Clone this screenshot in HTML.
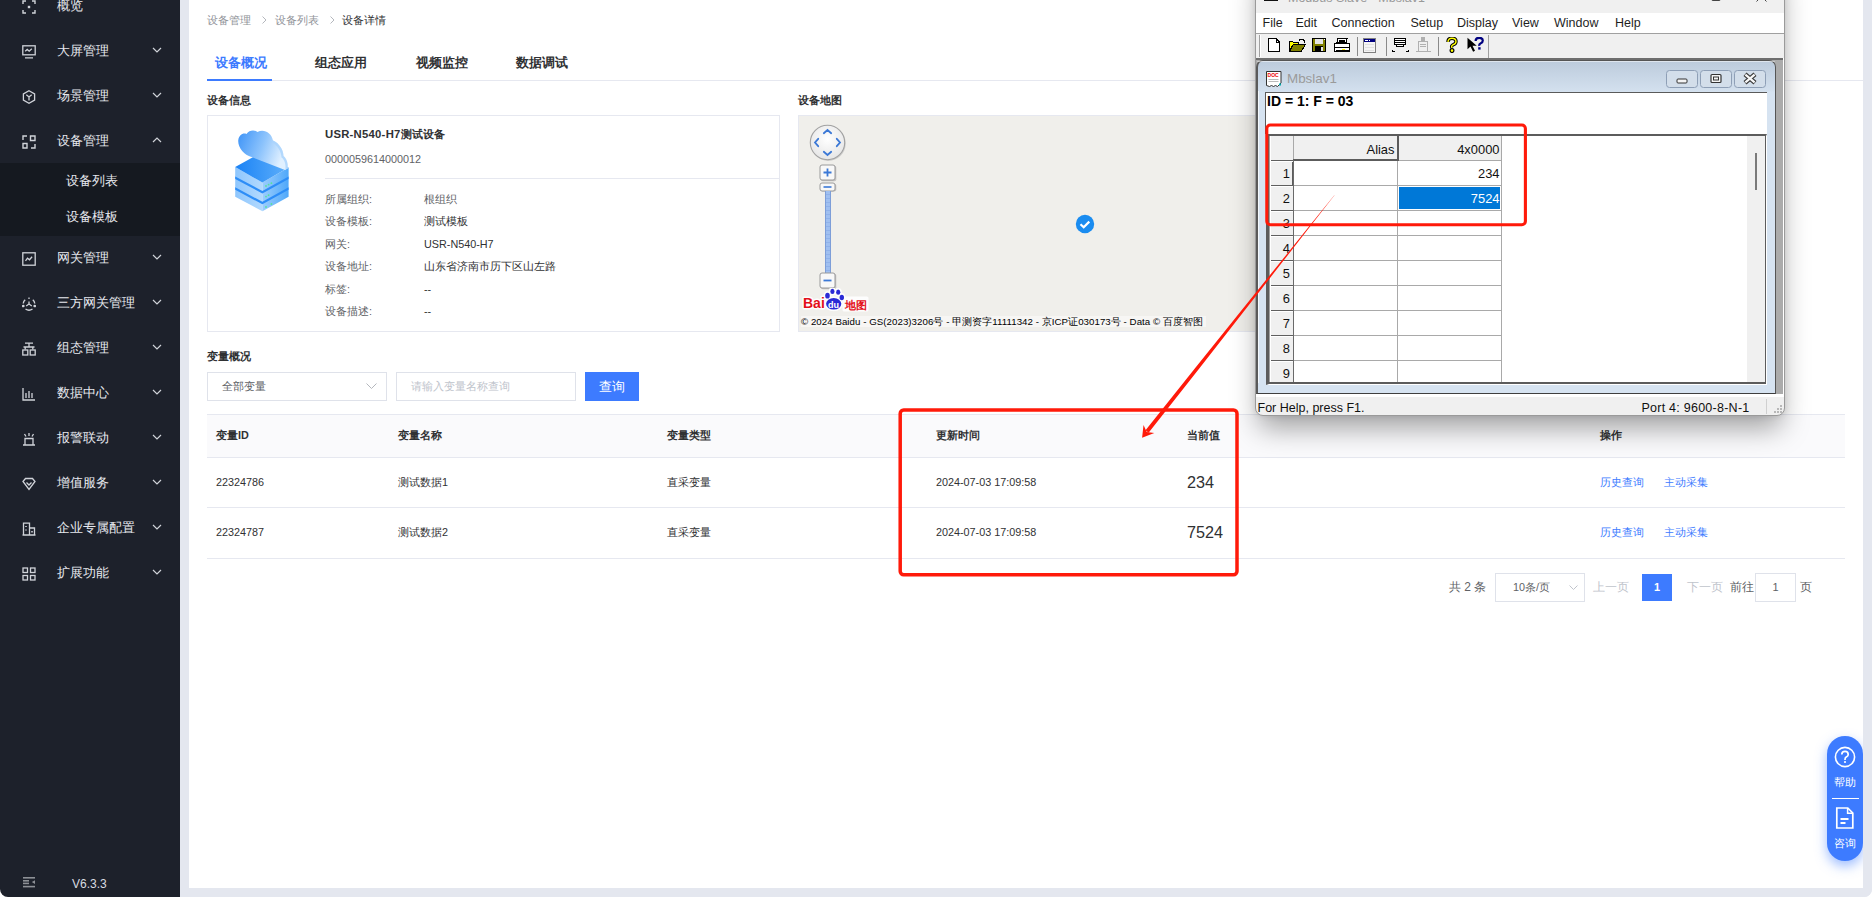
<!DOCTYPE html>
<html><head><meta charset="utf-8">
<style>
*{margin:0;padding:0;box-sizing:border-box}
html,body{width:1872px;height:897px;overflow:hidden;background:#fff}
body{font-family:"Liberation Sans",sans-serif;position:relative;color:#303133}
.a{position:absolute;white-space:nowrap}
/* sidebar */
#sb{position:absolute;left:0;top:0;width:180px;height:897px;background:#1d212b;border-bottom-left-radius:8px}
.mi{position:absolute;left:0;width:180px;height:45px;color:#e6e8ee;font-size:13px}
.mi .t{position:absolute;left:57px;top:0;line-height:45px}
.mi .ic{position:absolute;left:22px;top:17px;width:14px;height:14px}
.mi .ch{position:absolute;left:152px;top:19px;width:10px;height:6px}
#sub{position:absolute;left:0;top:163px;width:180px;height:73px;background:#151920}
.si{position:absolute;left:66px;color:#e6e8ee;font-size:13px;line-height:36px}
#gut{position:absolute;left:180px;top:0;width:9px;height:897px;background:#e4e7ef}
#gutr{position:absolute;left:1863px;top:0;width:9px;height:897px;background:#e4e7ef;border-bottom-right-radius:8px}
#gutb{position:absolute;left:180px;top:888px;width:1692px;height:9px;background:#e4e7ef;border-bottom-right-radius:8px}

.c12{font-size:10.8px}
#bc{position:absolute;left:207px;top:12px;font-size:10.8px;color:#909399;line-height:16px}
#bc span{position:absolute;white-space:nowrap}
.tab{position:absolute;top:54px;font-size:12.6px;font-weight:bold;color:#303133;line-height:18px;white-space:nowrap}
.sec{position:absolute;font-size:10.8px;font-weight:bold;color:#303133;line-height:14px;white-space:nowrap}
.lb{position:absolute;left:325px;font-size:10.8px;color:#606266;line-height:14px;white-space:nowrap}
.vl{position:absolute;left:424px;font-size:10.8px;color:#303133;line-height:14px;white-space:nowrap}
.th{position:absolute;top:428px;font-size:10.8px;font-weight:bold;color:#303133;line-height:14px;white-space:nowrap}
.td{position:absolute;font-size:10.8px;color:#303133;line-height:14px;white-space:nowrap}
.lk{position:absolute;font-size:10.8px;color:#3d7bff;line-height:14px;white-space:nowrap}
.hl{position:absolute;left:207px;width:1638px;height:1px;background:#e6e8f0}

#mb{position:absolute;left:1255px;top:-40px;width:530px;height:456px;background:#f0f0f0;border:1px solid #9a9a9a;border-radius:8px;box-shadow:0 16px 28px -4px rgba(0,0,0,0.36),0 0 6px rgba(0,0,0,0.10);overflow:hidden;font-family:"Liberation Sans",sans-serif}
#mb .m{position:absolute;top:0;font-size:12.4px;color:#1a1a1a;line-height:19px;white-space:nowrap}
.seg{position:absolute;font-size:12.9px;color:#111;white-space:nowrap;line-height:14px}
.gl{position:absolute;background:#a9a9a9}
</style></head><body>
<div id="sb">
  <div class="mi" style="top:-17px"><svg class="ic" viewBox="0 0 14 14" fill="none" stroke="#d0d3d9" stroke-width="1.4"><path d="M1 4V1h3M10 1h3v3M13 10v3h-3M4 13H1v-3"/><rect x="5.8" y="5.8" width="2.4" height="2.4" fill="#d0d3d9" stroke="none"/></svg><span class="t">概览</span></div>
  <div class="mi" style="top:28px"><svg class="ic" viewBox="0 0 14 14" fill="none" stroke="#d0d3d9" stroke-width="1.3"><rect x="0.8" y="0.8" width="12.4" height="9"/><path d="M3 12.8h8M3.2 6.2l2-1.8 2 1.8 2.6-2.4"/></svg><span class="t">大屏管理</span><svg class="ch" viewBox="0 0 10 6" fill="none" stroke="#d0d3d9" stroke-width="1.2"><path d="M1 1l4 4 4-4"/></svg></div>
  <div class="mi" style="top:73px"><svg class="ic" viewBox="0 0 14 14" fill="none" stroke="#d0d3d9" stroke-width="1.3"><path d="M7 0.8l5.6 3.2v6L7 13.2 1.4 10V4z"/><path d="M4.3 4.8L7 7l2.7-2.2M7 7v3.6"/></svg><span class="t">场景管理</span><svg class="ch" viewBox="0 0 10 6" fill="none" stroke="#d0d3d9" stroke-width="1.2"><path d="M1 1l4 4 4-4"/></svg></div>
  <div class="mi" style="top:118px"><svg class="ic" viewBox="0 0 14 14" fill="none" stroke="#d0d3d9" stroke-width="1.4"><path d="M1 5V1h4M1 8.5h4v4.5H1zM8.5 1h4.5v4.5H8.5zM13 9v4H9"/></svg><span class="t">设备管理</span><svg class="ch" viewBox="0 0 10 6" fill="none" stroke="#d0d3d9" stroke-width="1.2"><path d="M1 5l4-4 4 4"/></svg></div>
  <div class="mi" style="top:235px"><svg class="ic" viewBox="0 0 14 14" fill="none" stroke="#d0d3d9" stroke-width="1.3"><rect x="0.8" y="0.8" width="12.4" height="12.4"/><path d="M3.5 8.8l2-2.6 2 1.6 2.6-3"/></svg><span class="t">网关管理</span><svg class="ch" viewBox="0 0 10 6" fill="none" stroke="#d0d3d9" stroke-width="1.2"><path d="M1 1l4 4 4-4"/></svg></div>
  <div class="mi" style="top:280px"><svg class="ic" viewBox="0 0 14 14" fill="none" stroke="#d0d3d9" stroke-width="1.3"><path d="M7 0.5v1.5M7 4.5v2.5L4.2 9M7 7l2.8 2M3.2 2.8A6 6 0 0 0 1.2 6.5M10.8 2.8A6 6 0 0 1 12.8 6.5M3.5 12a6 6 0 0 0 7 0"/><circle cx="1.3" cy="9" r="0.7" fill="#d0d3d9"/><circle cx="12.7" cy="9" r="0.7" fill="#d0d3d9"/></svg><span class="t">三方网关管理</span><svg class="ch" viewBox="0 0 10 6" fill="none" stroke="#d0d3d9" stroke-width="1.2"><path d="M1 1l4 4 4-4"/></svg></div>
  <div class="mi" style="top:325px"><svg class="ic" viewBox="0 0 14 14" fill="none" stroke="#d0d3d9" stroke-width="1.3"><path d="M3 1.2h8M7 1.2v3.8M1.5 5h11M3.2 5v2.5M10.8 5v2.5"/><rect x="0.8" y="8" width="5" height="5"/><rect x="8.2" y="8" width="5" height="5"/></svg><span class="t">组态管理</span><svg class="ch" viewBox="0 0 10 6" fill="none" stroke="#d0d3d9" stroke-width="1.2"><path d="M1 1l4 4 4-4"/></svg></div>
  <div class="mi" style="top:370px"><svg class="ic" viewBox="0 0 14 14" fill="none" stroke="#d0d3d9" stroke-width="1.3"><path d="M1 1v12h12M4 6v5M7 4v7M10 6v5"/></svg><span class="t">数据中心</span><svg class="ch" viewBox="0 0 10 6" fill="none" stroke="#d0d3d9" stroke-width="1.2"><path d="M1 1l4 4 4-4"/></svg></div>
  <div class="mi" style="top:415px"><svg class="ic" viewBox="0 0 14 14" fill="none" stroke="#d0d3d9" stroke-width="1.3"><path d="M1 13h12M3 13V6.5h8V13M7 1v3M2.5 2l1.5 2.5M11.5 2l-1.5 2.5"/></svg><span class="t">报警联动</span><svg class="ch" viewBox="0 0 10 6" fill="none" stroke="#d0d3d9" stroke-width="1.2"><path d="M1 1l4 4 4-4"/></svg></div>
  <div class="mi" style="top:460px"><svg class="ic" viewBox="0 0 14 14" fill="none" stroke="#d0d3d9" stroke-width="1.3"><path d="M1 4.5L3.5 1.5h7L13 4.5 7 12.5z"/><path d="M4.5 5.5L7 8l2.5-2.5"/></svg><span class="t">增值服务</span><svg class="ch" viewBox="0 0 10 6" fill="none" stroke="#d0d3d9" stroke-width="1.2"><path d="M1 1l4 4 4-4"/></svg></div>
  <div class="mi" style="top:505px"><svg class="ic" viewBox="0 0 14 14" fill="none" stroke="#d0d3d9" stroke-width="1.3"><path d="M0.5 13h13M1.5 13V1.2h6V13M7.5 6h5V13"/><path d="M4 4v1M4 7.5v1M10 9v1.5" stroke-width="1.6"/></svg><span class="t">企业专属配置</span><svg class="ch" viewBox="0 0 10 6" fill="none" stroke="#d0d3d9" stroke-width="1.2"><path d="M1 1l4 4 4-4"/></svg></div>
  <div class="mi" style="top:550px"><svg class="ic" viewBox="0 0 14 14" fill="none" stroke="#d0d3d9" stroke-width="1.3"><rect x="1" y="1" width="4.5" height="4.5"/><rect x="8.5" y="1" width="4.5" height="4.5"/><rect x="1" y="8.5" width="4.5" height="4.5"/><rect x="8.5" y="8.5" width="4.5" height="4.5"/></svg><span class="t">扩展功能</span><svg class="ch" viewBox="0 0 10 6" fill="none" stroke="#d0d3d9" stroke-width="1.2"><path d="M1 1l4 4 4-4"/></svg></div>
  <svg class="a" style="left:23px;top:877px" width="13" height="11" viewBox="0 0 13 11" fill="#8d9096"><rect x="0" y="0" width="12" height="1.6"/><rect x="0" y="3" width="6" height="1.6"/><rect x="0" y="5.6" width="6" height="1.6"/><rect x="0" y="8.8" width="12" height="1.6"/><path d="M12 3.2v3.8L8.8 5.1z"/></svg>
  <div class="a" style="left:72px;top:877px;font-size:12px;color:#d9dbe0;line-height:14px">V6.3.3</div>
  <div id="sub"><div class="si" style="top:0">设备列表</div><div class="si" style="top:36px">设备模板</div></div>
</div>

<!-- breadcrumb -->
<div id="bc"><span style="left:0">设备管理</span><svg class="a" style="left:55px;top:4px" width="5" height="8" viewBox="0 0 5 8" fill="none" stroke="#b4b7bd" stroke-width="1"><path d="M0.5 0.5L4 4 0.5 7.5"/></svg><span style="left:68px">设备列表</span><svg class="a" style="left:123px;top:4px" width="5" height="8" viewBox="0 0 5 8" fill="none" stroke="#b4b7bd" stroke-width="1"><path d="M0.5 0.5L4 4 0.5 7.5"/></svg><span style="left:135px;color:#303133">设备详情</span></div>
<!-- tabs -->
<div class="tab" style="left:215px;color:#3d7bff">设备概况</div>
<div class="tab" style="left:315px">组态应用</div>
<div class="tab" style="left:416px">视频监控</div>
<div class="tab" style="left:516px">数据调试</div>
<div class="a" style="left:207px;top:80px;width:1656px;height:1px;background:#e6e8f0"></div>
<div class="a" style="left:207px;top:79px;width:65px;height:2px;background:#3d7bff"></div>
<!-- device info -->
<div class="sec" style="left:207px;top:93px">设备信息</div>
<div class="a" style="left:207px;top:115px;width:573px;height:217px;border:1px solid #e6e8f0"></div>
<svg class="a" style="left:228px;top:125px" width="70" height="92" viewBox="0 0 70 92">
<defs>
<linearGradient id="cl" x1="0" y1="0" x2="1" y2="0.3"><stop offset="0" stop-color="#3d93f7"/><stop offset="0.55" stop-color="#8cc3fc"/><stop offset="1" stop-color="#e0f0ff"/></linearGradient>
<linearGradient id="lf" x1="0" y1="0" x2="1" y2="0"><stop offset="0" stop-color="#8ec6fd"/><stop offset="1" stop-color="#b2d9fe"/></linearGradient>
<linearGradient id="rf" x1="0" y1="0" x2="1" y2="0"><stop offset="0" stop-color="#9bcdfd"/><stop offset="1" stop-color="#4fa8fa"/></linearGradient>
<linearGradient id="tp" x1="0" y1="0" x2="1" y2="0"><stop offset="0" stop-color="#1a82f5"/><stop offset="1" stop-color="#5fb0fb"/></linearGradient>
</defs>
<path d="M7.2 42.1 L34.4 57.5 L34.4 86.2 L7.2 71.8z" fill="url(#lf)"/>
<path d="M34.4 57.5 L60.6 42.6 L60.6 71.8 L34.4 86.2z" fill="url(#rf)"/>
<path d="M7.2 51.5 L34.4 66 L60.6 51.5 L60.6 54 L34.4 68.5 L7.2 54z" fill="#2d8df7"/>
<path d="M7.2 62.3 L34.4 76.8 L60.6 62.3 L60.6 64.8 L34.4 79.3 L7.2 64.8z" fill="#2d8df7"/>
<path d="M7.2 42.1 L34 27 L60.6 42.6 L34.4 57.5z" fill="url(#tp)"/>
<path d="M23.5 32 C16 30 9.5 22 10.3 15 C11 10 15 7.5 18.5 9 C21 5 26.5 4.5 29.5 7 C36 3.5 43.5 8 45 15.5 C51.5 18.5 55.5 25 55.5 31 C58.5 33.5 60.5 38.5 59.5 43.5 L57 45 Z" fill="url(#cl)"/>
<path d="M45 15.5 C51.5 18.5 55.5 25 55.5 31 C58.5 33.5 60.5 38.5 59.5 43.5 L57.5 44.5 C58 39 56.5 34.5 53.5 32.5 C53 26 49.5 20 43.5 17z" fill="#a9d3fd" opacity="0.8"/>
<g fill="#55e39c"><circle cx="38" cy="61" r="0.9"/><circle cx="40.6" cy="59.6" r="0.9"/><circle cx="43.4" cy="58.2" r="0.9"/><circle cx="38" cy="71.6" r="0.9"/><circle cx="40.6" cy="70.2" r="0.9"/><circle cx="38" cy="82" r="0.9"/><circle cx="43.4" cy="79" r="0.9"/></g>
</svg>

<div class="sec" style="left:325px;top:127px;font-size:11.3px;letter-spacing:0.25px">USR-N540-H7测试设备</div>
<div class="td" style="left:325px;top:152px;color:#606266">0000059614000012</div>
<div class="a" style="left:325px;top:178px;width:454px;height:1px;background:#e6e8f0"></div>
<div class="lb" style="top:192px">所属组织:</div><div class="vl" style="top:192px;color:#606266">根组织</div>
<div class="lb" style="top:214px">设备模板:</div><div class="vl" style="top:214px">测试模板</div>
<div class="lb" style="top:237px">网关:</div><div class="vl" style="top:237px">USR-N540-H7</div>
<div class="lb" style="top:259px">设备地址:</div><div class="vl" style="top:259px">山东省济南市历下区山左路</div>
<div class="lb" style="top:282px">标签:</div><div class="vl" style="top:282px">--</div>
<div class="lb" style="top:304px">设备描述:</div><div class="vl" style="top:304px">--</div>
<!-- map -->
<div class="sec" style="left:798px;top:93px">设备地图</div>
<div class="a" id="map" style="left:798px;top:115px;width:573px;height:217px;background:#f0efeb;border:1px solid #e6e8f0"></div>

<div class="a" style="left:798px;top:115px;width:573px;height:217px;overflow:hidden">
 <svg class="a" style="left:11px;top:9px" width="38" height="38" viewBox="0 0 38 38"><defs><radialGradient id="ng" cx="50%" cy="40%" r="60%"><stop offset="0" stop-color="#ffffff"/><stop offset="1" stop-color="#e6e6e6"/></radialGradient></defs><circle cx="19.3" cy="19.5" r="17.4" fill="#b5b5b5" opacity="0.6"/><circle cx="18.5" cy="18.5" r="17.2" fill="url(#ng)" stroke="#a2a2a2" stroke-width="1.1"/><g fill="none" stroke="#3b78d6" stroke-width="1.8" stroke-linecap="round"><path d="M14.8 9.2l3.7-3.2 3.7 3.2M14.8 27.8l3.7 3.2 3.7-3.2M9.2 14.8l-3.2 3.7 3.2 3.7M27.8 14.8l3.2 3.7-3.2 3.7"/></g></svg>
 <svg class="a" style="left:21px;top:49px" width="18" height="18" viewBox="0 0 18 18"><rect x="1.8" y="1.8" width="15.5" height="15.5" rx="2" fill="#b0b0b0" opacity="0.7"/><rect x="1" y="1" width="15" height="15" rx="2" fill="#f8f8f8" stroke="#9a9a9a"/><path d="M8.5 4.5v8M4.5 8.5h8" stroke="#3b78d6" stroke-width="1.8"/></svg>
 <svg class="a" style="left:21px;top:67px" width="18" height="10" viewBox="0 0 18 10"><rect x="1.8" y="1.8" width="15.5" height="7.8" rx="2" fill="#b0b0b0" opacity="0.7"/><rect x="1" y="1" width="15" height="8" rx="2" fill="#f8f8f8" stroke="#9a9a9a"/><path d="M4.5 5h8" stroke="#3b78d6" stroke-width="1.6"/></svg>
 <div class="a" style="left:27px;top:76px;width:6px;height:83px;background:repeating-linear-gradient(#9fbff0 0,#9fbff0 3px,#8fb1ea 3px,#8fb1ea 4px);border-left:1px solid #7d9ed8;border-right:1px solid #7d9ed8"></div>
 <svg class="a" style="left:21px;top:157px" width="18" height="18" viewBox="0 0 18 18"><rect x="1.8" y="1.8" width="15.5" height="15.5" rx="2" fill="#b0b0b0" opacity="0.7"/><rect x="1" y="1" width="15" height="15" rx="2" fill="#f8f8f8" stroke="#9a9a9a"/><path d="M4.5 8.5h8" stroke="#3b78d6" stroke-width="1.8"/></svg>
 <svg class="a" style="left:3px;top:173px" width="70" height="26" viewBox="0 0 70 26">
<g stroke="#fff" stroke-width="3" stroke-linejoin="round" opacity="0.9"><text x="2" y="20.3" font-family="Liberation Sans" font-weight="bold" font-size="14" fill="#fff">Bai</text><ellipse cx="32.7" cy="15.8" rx="7.8" ry="6" fill="#fff"/><rect x="43" y="10" width="23" height="12" fill="#fff"/><ellipse cx="26.5" cy="7.7" rx="2.4" ry="3" fill="#fff"/><ellipse cx="31.4" cy="3.4" rx="2.2" ry="2.7" fill="#fff"/><ellipse cx="37.2" cy="4.2" rx="2.2" ry="2.7" fill="#fff"/><ellipse cx="40.8" cy="9.5" rx="2.3" ry="2.9" fill="#fff"/></g>
<text x="2" y="20.3" font-family="Liberation Sans" font-weight="bold" font-size="14" fill="#e3101a">Bai</text>
<g fill="#2a2ad6"><ellipse cx="32.7" cy="15.8" rx="7.6" ry="5.8"/><ellipse cx="26.5" cy="7.7" rx="2.3" ry="2.9"/><ellipse cx="31.4" cy="3.4" rx="2.1" ry="2.6"/><ellipse cx="37.2" cy="4.2" rx="2.1" ry="2.6"/><ellipse cx="40.8" cy="9.5" rx="2.2" ry="2.8"/></g>
<text x="27" y="20" font-family="Liberation Sans" font-weight="bold" font-size="9" fill="#fff">du</text>
<text x="43.5" y="20.8" font-size="10.5" font-weight="bold" fill="#e3101a" font-family="Liberation Sans">地图</text>
</svg>
 <div class="a" style="left:3px;top:201px;height:11px;background:rgba(255,255,255,0.45);font-size:9.7px;color:#000;line-height:11px;padding-right:3px;letter-spacing:0.05px">&#169; 2024 Baidu - GS(2023)3206号 - 甲测资字11111342 - 京ICP证030173号 - Data &#169; 百度智图</div>
 <svg class="a" style="left:277px;top:99px" width="20" height="20" viewBox="0 0 20 20"><circle cx="10" cy="10" r="9.2" fill="#1a8cf0"/><path d="M5.5 10.2l3.2 3 5.6-5.6" fill="none" stroke="#fff" stroke-width="2.2"/></svg>
</div>
<!-- variables -->
<div class="sec" style="left:207px;top:349px">变量概况</div>
<div class="a" style="left:207px;top:372px;width:180px;height:29px;border:1px solid #dfe2ea"></div>
<div class="td" style="left:222px;top:379px;color:#606266">全部变量</div>
<svg class="a" style="left:366px;top:383px" width="11" height="6" viewBox="0 0 11 6" fill="none" stroke="#b4b7bd" stroke-width="1"><path d="M0.5 0.5l5 5 5-5"/></svg>
<div class="a" style="left:396px;top:372px;width:180px;height:29px;border:1px solid #dfe2ea"></div>
<div class="td" style="left:411px;top:379px;color:#c0c4cc">请输入变量名称查询</div>
<div class="a" style="left:585px;top:372px;width:54px;height:29px;background:#3d7bff;color:#fff;font-size:12.6px;line-height:30px;text-align:center">查询</div>
<!-- table -->
<div class="a" style="left:207px;top:414px;width:1638px;height:44px;background:#fafafc"></div>
<div class="hl" style="top:414px"></div>
<div class="hl" style="top:457px"></div>
<div class="hl" style="top:507px"></div>
<div class="hl" style="top:558px"></div>
<div class="th" style="left:216px">变量ID</div>
<div class="th" style="left:398px">变量名称</div>
<div class="th" style="left:667px">变量类型</div>
<div class="th" style="left:936px">更新时间</div>
<div class="th" style="left:1187px">当前值</div>
<div class="th" style="left:1600px">操作</div>
<div class="td" style="left:216px;top:475px">22324786</div>
<div class="td" style="left:398px;top:475px">测试数据1</div>
<div class="td" style="left:667px;top:475px">直采变量</div>
<div class="td" style="left:936px;top:475px">2024-07-03 17:09:58</div>
<div class="td" style="left:1187px;top:472px;font-size:16.2px;line-height:20px">234</div>
<div class="lk" style="left:1600px;top:475px">历史查询</div>
<div class="lk" style="left:1664px;top:475px">主动采集</div>
<div class="td" style="left:216px;top:525px">22324787</div>
<div class="td" style="left:398px;top:525px">测试数据2</div>
<div class="td" style="left:667px;top:525px">直采变量</div>
<div class="td" style="left:936px;top:525px">2024-07-03 17:09:58</div>
<div class="td" style="left:1187px;top:522px;font-size:16.2px;line-height:20px">7524</div>
<div class="lk" style="left:1600px;top:525px">历史查询</div>
<div class="lk" style="left:1664px;top:525px">主动采集</div>
<!-- pagination -->
<div class="td" style="left:1449px;top:580px;color:#606266;font-size:12px">共 2 条</div>
<div class="a" style="left:1495px;top:573px;width:90px;height:29px;border:1px solid #dfe2ea"></div>
<div class="td" style="left:1513px;top:580px;color:#606266">10条/页</div>
<svg class="a" style="left:1569px;top:585px" width="9" height="5" viewBox="0 0 9 5" fill="none" stroke="#c0c4cc" stroke-width="1"><path d="M0.5 0.5l4 4 4-4"/></svg>
<div class="td" style="left:1593px;top:580px;color:#c0c4cc;font-size:12px">上一页</div>
<div class="a" style="left:1642px;top:574px;width:30px;height:27px;background:#3d7bff;color:#fff;font-size:11px;font-weight:bold;line-height:27px;text-align:center">1</div>
<div class="td" style="left:1687px;top:580px;color:#c0c4cc;font-size:12px">下一页</div>
<div class="td" style="left:1730px;top:580px;color:#606266;font-size:12px">前往</div>
<div class="a" style="left:1755px;top:573px;width:41px;height:29px;border:1px solid #dfe2ea;font-size:11px;line-height:27px;text-align:center;color:#606266">1</div>
<div class="td" style="left:1800px;top:580px;color:#606266;font-size:12px">页</div>
<!-- float help -->
<div id="mb">
<div class="a" style="left:0;top:51.5px;width:530px;height:20px;background:#fff"></div>
<div class="a" style="left:0;top:71.5px;width:530px;height:1px;background:#a0a0a0"></div>
<div class="a" style="left:6.5px;top:52.5px;font-size:12.5px;color:#1f1f1f;line-height:18px">File</div>
<div class="a" style="left:39.5px;top:52.5px;font-size:12.5px;color:#1f1f1f;line-height:18px">Edit</div>
<div class="a" style="left:75.5px;top:52.5px;font-size:12.5px;color:#1f1f1f;line-height:18px">Connection</div>
<div class="a" style="left:154.5px;top:52.5px;font-size:12.5px;color:#1f1f1f;line-height:18px">Setup</div>
<div class="a" style="left:201px;top:52.5px;font-size:12.5px;color:#1f1f1f;line-height:18px">Display</div>
<div class="a" style="left:256px;top:52.5px;font-size:12.5px;color:#1f1f1f;line-height:18px">View</div>
<div class="a" style="left:298px;top:52.5px;font-size:12.5px;color:#1f1f1f;line-height:18px">Window</div>
<div class="a" style="left:359px;top:52.5px;font-size:12.5px;color:#1f1f1f;line-height:18px">Help</div>
<div class="a" style="left:32px;top:30px;font-size:12.5px;color:#999;line-height:14px">Modbus Slave - Mbslav1</div>
<div class="a" style="left:8px;top:33px;width:14px;height:7px;background:#111"></div>
<div class="a" style="left:455px;top:30px;width:10px;height:10px;border:1px solid #444;border-radius:2px"></div>
<svg class="a" style="left:500px;top:30px" width="11" height="11" viewBox="0 0 11 11" stroke="#444" stroke-width="1"><path d="M0.5 0.5l10 10M10.5 0.5l-10 10"/></svg>
<div class="a" style="left:3px;top:74px;width:1px;height:22px;background:#a0a0a0"></div>
<div class="a" style="left:4px;top:74px;width:1px;height:22px;background:#fff"></div>
<div class="a" style="left:100.5px;top:76px;width:1px;height:19px;background:#8a8a8a"></div>
<div class="a" style="left:129.5px;top:76px;width:1px;height:19px;background:#8a8a8a"></div>
<div class="a" style="left:181.5px;top:76px;width:1px;height:19px;background:#8a8a8a"></div>
<div class="a" style="left:231.5px;top:74px;width:1px;height:23px;background:#a0a0a0"></div>
<svg class="a" style="left:11px;top:76px" width="14" height="16" viewBox="0 0 14 16" shape-rendering="crispEdges"><path d="M1.5 1.5h7.5l3.5 3.5v9.5h-11z" fill="#fff" stroke="#000" stroke-width="1"/><path d="M9 1.5v3.5h3.5" fill="none" stroke="#000" stroke-width="1"/></svg>
<svg class="a" style="left:33px;top:76px" width="17" height="16" viewBox="0 0 17 16" shape-rendering="crispEdges"><path d="M0.5 4.5h3l1 1h5v1.5H4.5L0.5 14z" fill="#ffff00" stroke="#000"/><path d="M0.5 14.5L4.5 7.5h12l-4.5 7z" fill="#808000" stroke="#000"/><path d="M10 3.5l1-1.5h2.5l1.5 1.5v1.5" fill="none" stroke="#000"/><path d="M13.5 4.5h3l-1.5 1.5z" fill="#000"/></svg>
<svg class="a" style="left:56px;top:77px" width="14" height="14" viewBox="0 0 14 14" shape-rendering="crispEdges"><rect x="0.5" y="0.5" width="13" height="13" fill="#808000" stroke="#000"/><rect x="3" y="1" width="8" height="5" fill="#e6e6e6"/><rect x="11.5" y="1" width="1" height="1" fill="#fff"/><rect x="3" y="8" width="8" height="5.5" fill="#000"/><rect x="9" y="9" width="1.5" height="3.5" fill="#e6e6e6"/></svg>
<svg class="a" style="left:78px;top:77px" width="16" height="15" viewBox="0 0 16 15" shape-rendering="crispEdges"><path d="M3.5 0.5h9.5l-1 4H3z" fill="#fff" stroke="#000"/><path d="M4.5 2.5h6M4.5 3.5h6" stroke="#000"/><path d="M0.5 5.5h15v8h-15z" fill="#fff" stroke="#000"/><path d="M0.5 9.5h15" stroke="#000"/><path d="M1.5 12.5h13" stroke="#000"/><rect x="8" y="10.5" width="3" height="1" fill="#ffff00"/></svg>
<svg class="a" style="left:107px;top:77px" width="13" height="15" viewBox="0 0 13 15" shape-rendering="crispEdges"><rect x="0.5" y="0.5" width="12" height="14" fill="#f4f4f4" stroke="#808080"/><rect x="1" y="1" width="11" height="3" fill="#000080"/><rect x="2" y="2" width="3" height="1" fill="#fff"/><rect x="6" y="2" width="1" height="1" fill="#fff"/><path d="M2 6.5h9M2 9.5h9M2 12.5h9" stroke="#e0e0e0"/></svg>
<svg class="a" style="left:136px;top:76px" width="17" height="16" viewBox="0 0 17 16" shape-rendering="crispEdges"><rect x="2.5" y="1.5" width="11" height="6" fill="#fff" stroke="#000"/><path d="M3 3.5h10M3 5.5h10" stroke="#000"/><path d="M4.5 7.5v2h7v-2" fill="#fff" stroke="#000"/><path d="M0 14.5h2.5M14 14.5h2.5M0.5 14v-1M16 14v-1" stroke="#000"/></svg>
<svg class="a" style="left:159px;top:76px" width="17" height="16" viewBox="0 0 17 16" shape-rendering="crispEdges"><rect x="6.5" y="0.5" width="3" height="3" fill="#b0b0b0" stroke="#b0b0b0"/><path d="M3.5 4.5h9v9.5h-9z" fill="#efefef" stroke="#b0b0b0"/><path d="M5 7.5h6M5 9.5h6" stroke="#b0b0b0"/><path d="M0.5 14.5h15" stroke="#b0b0b0"/></svg>
<svg class="a" style="left:190px;top:76px" width="12" height="16" viewBox="0 0 12 16"><path d="M2 5q0-3.8 4-3.8t4 3.4q0 2.2-2.6 3.1t-1.4 3.2" fill="none" stroke="#000" stroke-width="3.4"/><path d="M2 5q0-3.8 4-3.8t4 3.4q0 2.2-2.6 3.1t-1.4 3.2" fill="none" stroke="#ffff00" stroke-width="1.4"/><circle cx="6" cy="13.6" r="1.9" fill="#ffff00" stroke="#000" stroke-width="1.2"/></svg>
<svg class="a" style="left:211px;top:76px" width="17" height="16" viewBox="0 0 17 16"><path d="M0.5 0.8v11.5l3-2.8 2.6 5.2 1.9-.9-2.5-5h4.2z" fill="#000"/><path d="M8.6 4q0-3.2 3.6-3.2t3.6 2.8q0 1.9-2 2.7t-1.4 2.6" fill="none" stroke="#000080" stroke-width="2.2"/><rect x="11.2" y="10.2" width="2.4" height="2.4" fill="#000080"/></svg>
<div class="a" style="left:0;top:97px;width:530px;height:336px;background:#ababab"></div>
<div class="a" style="left:0;top:97px;width:530px;height:2px;background:#6e6e6e"></div>
<div class="a" style="left:0px;top:99px;width:520px;height:334px;background:linear-gradient(#bccbdc 0px,#d3e0ee 30px,#d6e3f1 31px);border:1px solid #555;border-left:2px solid #5a5a5a;border-bottom:1.5px solid #3f3f3f;border-radius:7px 7px 0 0"></div><div class="a" style="left:2px;top:130px;width:1px;height:292px;background:#f4f8fc"></div>
<div class="a" style="left:1px;top:100px;width:518px;height:1px;background:rgba(255,255,255,0.5);border-radius:6px 6px 0 0"></div>
<svg class="a" style="left:10px;top:110px" width="16" height="16" viewBox="0 0 16 16"><path d="M0.5 0.5h14.5v11.5l-3.5 3.5-2-1-2 1-2-1-2 1-3-1z" fill="#fff" stroke="#333" stroke-width="1"/><text x="1.6" y="6" font-size="5" font-weight="bold" fill="#e00" font-family="Liberation Sans">DOC</text><path d="M2.5 8.5h10M2.5 10.5h10" stroke="#aaa" stroke-width="0.8"/><rect x="13" y="12.5" width="2" height="2" fill="#0aa"/></svg>
<div class="a" style="left:31px;top:109px;font-size:13.4px;color:#9a9a9a;line-height:18px">Mbslav1</div>
<svg class="a" style="left:410px;top:109px" width="32" height="18" viewBox="0 0 32 18"><rect x="0.5" y="0.5" width="31" height="17" rx="3" fill="#d3deea" stroke="#8e9fb6"/><rect x="11" y="9" width="10" height="4" rx="1" fill="#f4f4f4" stroke="#333" stroke-width="1"/></svg>
<svg class="a" style="left:444px;top:109px" width="32" height="18" viewBox="0 0 32 18"><rect x="0.5" y="0.5" width="31" height="17" rx="3" fill="#d3deea" stroke="#8e9fb6"/><rect x="11" y="4.5" width="10" height="8" rx="1" fill="#f4f4f4" stroke="#333" stroke-width="1.2"/><rect x="13.5" y="7" width="5" height="3" fill="none" stroke="#333" stroke-width="1"/></svg>
<svg class="a" style="left:478px;top:109px" width="32" height="18" viewBox="0 0 32 18"><rect x="0.5" y="0.5" width="31" height="17" rx="3" fill="#d3deea" stroke="#8e9fb6"/><path d="M11 4.3l10 8.4M21 4.3l-10 8.4" stroke="#3a3a3a" stroke-width="4.6"/><path d="M11.4 4.6l9.2 7.8M20.6 4.6l-9.2 7.8" stroke="#f8f8f8" stroke-width="2.2"/></svg>
<div class="a" style="left:9px;top:130.5px;width:502px;height:42.5px;background:#fff;border-top:1.5px solid #5a5a5a;border-left:1.5px solid #5a5a5a"></div>
<div class="a" style="left:11px;top:132px;font-size:14px;font-weight:bold;color:#000;line-height:16px">ID = 1: F = 03</div>
<div class="a" style="left:10px;top:172.5px;width:501px;height:251.5px;background:#fff;border-top:2px solid #5c5c5c;border-left:3px solid #5c5c5c;border-bottom:1px solid #fff;border-right:1px solid #fff"></div>
<div class="a" style="left:9.5px;top:420.8px;width:500.5px;height:2px;background:#5c5c5c"></div>
<div class="a" style="left:509px;top:172.5px;width:1px;height:250.3px;background:#5c5c5c"></div>
<div class="a" style="left:15px;top:174.5px;width:22px;height:246.3px;background:#f0f0f0"></div>
<div class="a" style="left:37px;top:174.5px;width:208px;height:24.5px;background:#f0f0f0"></div>
<div class="a" style="left:491px;top:174.5px;width:18px;height:246.3px;background:#f0f0f0"></div>
<div class="a" style="left:498.5px;top:192px;width:2px;height:37px;background:#7a7a7a"></div>
<div class="gl" style="left:15px;top:199px;width:231px;height:1px"></div>
<div class="gl" style="left:15px;top:224px;width:231px;height:1px"></div>
<div class="gl" style="left:15px;top:249px;width:231px;height:1px"></div>
<div class="gl" style="left:15px;top:274px;width:231px;height:1px"></div>
<div class="gl" style="left:15px;top:299px;width:231px;height:1px"></div>
<div class="gl" style="left:15px;top:324px;width:231px;height:1px"></div>
<div class="gl" style="left:15px;top:349px;width:231px;height:1px"></div>
<div class="gl" style="left:15px;top:374px;width:231px;height:1px"></div>
<div class="gl" style="left:15px;top:399px;width:231px;height:1px"></div>
<div class="gl" style="left:37px;top:174.5px;width:1px;height:246.3px"></div>
<div class="gl" style="left:141px;top:174.5px;width:1px;height:246.3px"></div>
<div class="gl" style="left:245px;top:174.5px;width:1px;height:246.3px"></div>
<div class="a" style="left:37px;top:198px;width:105px;height:2px;background:#5c5c5c"></div>
<div class="a" style="left:140.5px;top:175px;width:2px;height:25px;background:#5c5c5c"></div>
<div class="a" style="left:12px;top:223.5px;width:26px;height:2px;background:#5c5c5c"></div>
<div class="a" style="left:36px;top:199px;width:2px;height:26px;background:#5c5c5c"></div>
<div class="a" style="left:12px;top:224px;width:2px;height:25px;background:#5c5c5c"></div>
<div class="a" style="left:15px;top:199px;width:22px;height:1px;background:#5f5f5f"></div><div class="a" style="left:15px;top:200px;width:22px;height:1px;background:#fff"></div>
<div class="a" style="left:15px;top:224px;width:22px;height:1px;background:#5f5f5f"></div><div class="a" style="left:15px;top:225px;width:22px;height:1px;background:#fff"></div>
<div class="a" style="left:15px;top:249px;width:22px;height:1px;background:#5f5f5f"></div><div class="a" style="left:15px;top:250px;width:22px;height:1px;background:#fff"></div>
<div class="a" style="left:15px;top:274px;width:22px;height:1px;background:#5f5f5f"></div><div class="a" style="left:15px;top:275px;width:22px;height:1px;background:#fff"></div>
<div class="a" style="left:15px;top:299px;width:22px;height:1px;background:#5f5f5f"></div><div class="a" style="left:15px;top:300px;width:22px;height:1px;background:#fff"></div>
<div class="a" style="left:15px;top:324px;width:22px;height:1px;background:#5f5f5f"></div><div class="a" style="left:15px;top:325px;width:22px;height:1px;background:#fff"></div>
<div class="a" style="left:15px;top:349px;width:22px;height:1px;background:#5f5f5f"></div><div class="a" style="left:15px;top:350px;width:22px;height:1px;background:#fff"></div>
<div class="a" style="left:15px;top:374px;width:22px;height:1px;background:#5f5f5f"></div><div class="a" style="left:15px;top:375px;width:22px;height:1px;background:#fff"></div>
<div class="a" style="left:15px;top:399px;width:22px;height:1px;background:#5f5f5f"></div><div class="a" style="left:15px;top:400px;width:22px;height:1px;background:#fff"></div>
<div class="a" style="left:37px;top:199px;width:1px;height:221.8px;background:#6a6a6a"></div>
<div class="a" style="left:12.7px;top:174.5px;width:1.1px;height:246.3px;background:#a0a0a0"></div><div class="a" style="left:13.8px;top:174.5px;width:1.2px;height:246.3px;background:#fff"></div>
<div class="a" style="left:142.5px;top:226px;width:101.2px;height:22px;background:#0078d7"></div>
<div class="seg" style="right:389.5px;top:182px">Alias</div>
<div class="seg" style="right:284.5px;top:182px">4x0000</div>
<div class="seg" style="right:284.5px;top:206px">234</div>
<div class="seg" style="right:284.5px;top:231px;color:#fff">7524</div>
<div class="seg" style="right:494px;top:206px">1</div>
<div class="seg" style="right:494px;top:231px">2</div>
<div class="seg" style="right:494px;top:256px">3</div>
<div class="seg" style="right:494px;top:281px">4</div>
<div class="seg" style="right:494px;top:306px">5</div>
<div class="seg" style="right:494px;top:331px">6</div>
<div class="seg" style="right:494px;top:356px">7</div>
<div class="seg" style="right:494px;top:381px">8</div>
<div class="seg" style="right:494px;top:406px">9</div>
<div class="a" style="left:0;top:433.3px;width:530px;height:2.5px;background:#fff"></div>
<div class="a" style="left:527px;top:97px;width:2px;height:339px;background:#fff"></div>
<div class="a" style="left:1.5px;top:440px;font-size:12.5px;color:#111;line-height:14px">For Help, press F1.</div>
<div class="a" style="right:34.5px;top:440px;font-size:12.5px;color:#111;line-height:14px;letter-spacing:0.25px">Port 4: 9600-8-N-1</div>
<div class="a" style="left:509.5px;top:438px;width:1px;height:15px;background:#d0d0d0"></div>
<svg class="a" style="left:518px;top:444px" width="9" height="9" viewBox="0 0 9 9" fill="#b8b8b8"><rect x="6" y="0" width="2" height="2"/><rect x="3" y="3" width="2" height="2"/><rect x="6" y="3" width="2" height="2"/><rect x="0" y="6" width="2" height="2"/><rect x="3" y="6" width="2" height="2"/><rect x="6" y="6" width="2" height="2"/></svg>
</div>
<!-- float help -->
<div class="a" style="left:1827px;top:736px;width:36px;height:125px;border-radius:18px;background:#3d7bff;box-shadow:0 5px 12px rgba(61,123,255,0.5)"></div>

<svg class="a" style="left:1834px;top:746px" width="22" height="22" viewBox="0 0 22 22"><circle cx="11" cy="11" r="9.6" fill="none" stroke="#fff" stroke-width="1.6"/><path d="M7.8 8.6q0-3.2 3.2-3.2t3.2 3q0 1.6-1.6 2.4t-1.6 2.6v0.6" fill="none" stroke="#fff" stroke-width="1.7"/><circle cx="11" cy="16" r="1.1" fill="#fff"/></svg>
<div class="a" style="left:1827px;top:775px;width:36px;text-align:center;font-size:10.8px;color:#fff;line-height:14px">帮助</div>
<div class="a" style="left:1832px;top:798px;width:27px;height:1px;background:#fff"></div>
<svg class="a" style="left:1835px;top:807px" width="20" height="22" viewBox="0 0 20 22"><path d="M1.8 1h11l5 5v15H1.8z" fill="none" stroke="#fff" stroke-width="1.7"/><path d="M12.6 1v5.3h5.2" fill="none" stroke="#fff" stroke-width="1.5"/><path d="M5.5 12h8M5.5 16h5" stroke="#fff" stroke-width="1.8"/></svg>
<div class="a" style="left:1827px;top:836px;width:36px;text-align:center;font-size:10.8px;color:#fff;line-height:14px">咨询</div>

<svg class="a" style="left:0;top:0" width="1872" height="897" viewBox="0 0 1872 897">
<rect x="1266.8" y="125" width="258.6" height="99.7" rx="3.5" fill="none" stroke="#ff1a0a" stroke-width="3.1"/>
<rect x="900.2" y="410" width="336.8" height="164.85" rx="3.5" fill="none" stroke="#ff1a0a" stroke-width="3.5"/>
<path d="M1334.68 195.06 L1310.10 226.62 L1279.31 266.02 L1242.43 313.35 L1199.25 368.45 L1148.60 432.74 L1145.54 430.32 L1196.59 366.34 L1240.39 311.73 L1278.06 265.03 L1309.40 226.06 L1334.52 194.94Z" fill="#ff1a0a"/>
<path d="M1142.10 437.80 L1154.29 433.05 L1146.76 431.92 L1143.53 424.89Z" fill="#ff1a0a"/>
</svg>
<div id="gut"></div><div id="gutr"></div><div id="gutb"></div>
</body></html>
